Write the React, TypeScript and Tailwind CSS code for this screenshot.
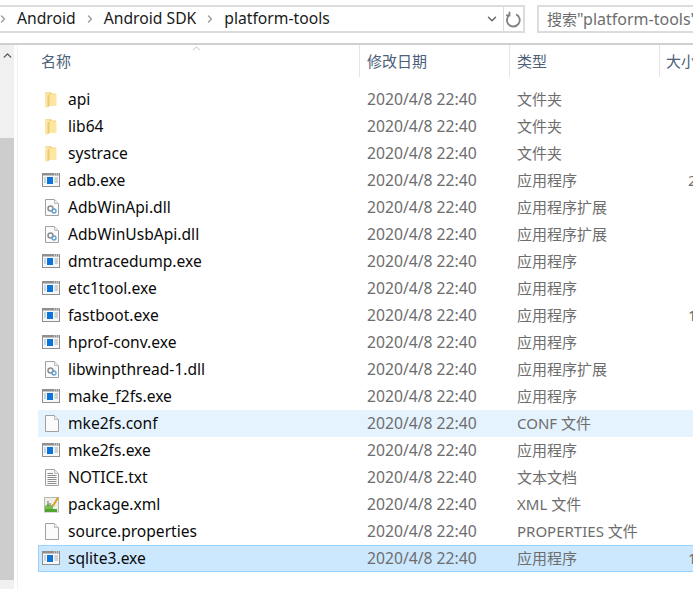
import { ChevronDown, ChevronRight, ChevronUp } from "lucide-react"

type Kind = "folder" | "exe" | "dll" | "blank" | "txt" | "xml"

const FILES: { name: string; kind: Kind; type: string; size?: string; state?: "hover" | "selected" }[] = [
  { name: "api", kind: "folder", type: "文件夹" },
  { name: "lib64", kind: "folder", type: "文件夹" },
  { name: "systrace", kind: "folder", type: "文件夹" },
  { name: "adb.exe", kind: "exe", type: "应用程序", size: "2" },
  { name: "AdbWinApi.dll", kind: "dll", type: "应用程序扩展" },
  { name: "AdbWinUsbApi.dll", kind: "dll", type: "应用程序扩展" },
  { name: "dmtracedump.exe", kind: "exe", type: "应用程序" },
  { name: "etc1tool.exe", kind: "exe", type: "应用程序" },
  { name: "fastboot.exe", kind: "exe", type: "应用程序", size: "1" },
  { name: "hprof-conv.exe", kind: "exe", type: "应用程序" },
  { name: "libwinpthread-1.dll", kind: "dll", type: "应用程序扩展" },
  { name: "make_f2fs.exe", kind: "exe", type: "应用程序" },
  { name: "mke2fs.conf", kind: "blank", type: "CONF 文件", state: "hover" },
  { name: "mke2fs.exe", kind: "exe", type: "应用程序" },
  { name: "NOTICE.txt", kind: "txt", type: "文本文档" },
  { name: "package.xml", kind: "xml", type: "XML 文件" },
  { name: "source.properties", kind: "blank", type: "PROPERTIES 文件" },
  { name: "sqlite3.exe", kind: "exe", type: "应用程序", size: "1", state: "selected" },
]

const Page = ({ children }: { children?: React.ReactNode }) => (
  <svg width="16" height="18" viewBox="0 0 16 18" className="ml-[1px]">
    <path d="M1.5 0.5H10.5L14.5 4.5V16.5H1.5Z" fill="#fbfbfb" stroke="#a0a0a0" />
    <path d="M10.5 0.5V4.5H14.5" fill="#ececec" stroke="#bdbdbd" />
    {children}
  </svg>
)

const FileIcon = ({ kind }: { kind: Kind }) => {
  if (kind === "folder")
    return (
      <svg width="18" height="18" viewBox="0 0 18 18">
        <path d="M3 1H9L10 2.5H14V14.5H3Z" fill="#f3d584" />
        <path d="M3 1.5H7V15.5L5 16.5H3Z" fill="#fbe8ae" />
        <path d="M7 3.5H14.5V14.5H7Z" fill="#fce6a0" />
        <path d="M5.5 4.5L7.5 3.5V15L5.5 16.5Z" fill="#eccb70" />
      </svg>
    )
  if (kind === "exe")
    return (
      <svg width="18" height="15" viewBox="0 0 18 15">
        <rect x="0.5" y="0.5" width="17" height="13" fill="#f7f7f7" stroke="#8f8f8f" />
        <rect x="0" y="0" width="18" height="2.5" fill="#8f8f8f" />
        <path d="M12 1H13M14 1H15M16 1H17" stroke="#ffffff" />
        <rect x="5" y="4" width="6" height="7" fill="#0a76dd" />
        <path d="M12.5 5H16M12.5 7H16M12.5 9H16M2 5H4M2 7H4M2 9H4" stroke="#a8adb3" />
      </svg>
    )
  if (kind === "dll")
    return (
      <Page>
        <circle cx="6.5" cy="9.5" r="2.5" fill="none" stroke="#8d8d8d" strokeWidth="1.5" />
        <circle cx="10" cy="12" r="2" fill="none" stroke="#5d9fd0" strokeWidth="1.3" />
      </Page>
    )
  if (kind === "txt")
    return (
      <Page>
        <path d="M3.5 4.5H9M3.5 6.5H12.5M3.5 8.5H12.5M3.5 10.5H12.5M3.5 12.5H12.5M3.5 14.5H12.5" stroke="#8d8d8d" />
      </Page>
    )
  if (kind === "xml")
    return (
      <svg width="16" height="18" viewBox="0 0 16 18" className="ml-[1px]">
        <rect x="0.5" y="1.5" width="14" height="14.5" fill="#eeeeea" stroke="#b9b9b0" />
        <path d="M1 10L4 8L6 10L9 8V16H1Z" fill="#78c04a" />
        <path d="M1 13H13V16H1Z" fill="#4fa52f" />
        <path d="M4 5V10M6 7V10" stroke="#6f6f58" />
        <path d="M9 10L14 1.5" stroke="#d9a126" strokeWidth="2" />
      </svg>
    )
  return <Page />
}

const FileRow = ({ file }: { file: (typeof FILES)[number] }) => {
  const bg =
    file.state === "selected"
      ? "bg-[#cce8ff] border-[#99d1ff]"
      : file.state === "hover"
        ? "bg-[#e5f3ff] border-[#e5f3ff]"
        : "border-transparent"
  return (
    <div className={`flex h-[27px] items-center border-y border-l ${bg}`}>
      <div className="flex w-[23px] shrink-0 justify-center pl-[1px]">
        <FileIcon kind={file.kind} />
      </div>
      <span className="w-[305px] shrink-0 pl-[6px] text-[15.6px] text-[#0a0a0a]">{file.name}</span>
      <span className="w-[150px] shrink-0 whitespace-nowrap text-[15.7px] text-[#6d6d6d]">2020/4/8 22:40</span>
      <span className="w-[171px] shrink-0 text-[15px] text-[#6d6d6d]">{file.type}</span>
      <span className="text-[15px] text-[#6d6d6d]">{file.size}</span>
    </div>
  )
}

const Crumb = ({ label }: { label: string }) => (
  <>
    <ChevronRight size={12} strokeWidth={3} className="shrink-0 text-[#a0a0a0]" />
    <span className="text-[15.7px] text-[#1a1a1a]">{label}</span>
  </>
)

const App = () => {
  return (
    <div
      className="flex h-[589px] w-[693px] flex-col overflow-hidden bg-white"
      style={{ fontFamily: '"Noto Sans", "Noto Sans CJK SC", sans-serif' }}
    >
      {/* toolbar */}
      <div className="flex h-[45px] shrink-0 items-start border-b-2 border-[#d0d0d0] pt-[5px]">
        <div className="flex h-[28px] w-[525px] shrink-0 items-center border-y-2 border-r-2 border-[#dcdcdc]">
          <div className="-ml-[3px] flex flex-1 items-center gap-[8px]">
            <Crumb label="Android" />
            <Crumb label="Android SDK" />
            <Crumb label="platform-tools" />
          </div>
          <ChevronDown size={14} strokeWidth={2.5} className="mr-[4px] text-[#666]" />
          <div className="flex h-full w-[20px] items-center justify-center border-l border-[#dcdcdc]">
            <svg width="17" height="17" viewBox="0 0 16 16" fill="none" stroke="#808080" strokeWidth="1.7">
              <path d="M10.5 3.2A6 6 0 1 1 4.5 3.6" />
              <path d="M4.2 0.8V4.2H1" />
            </svg>
          </div>
        </div>
        <div className="ml-[12px] flex h-[28px] flex-1 items-center overflow-hidden whitespace-nowrap border-y-2 border-l-2 border-[#dcdcdc] pl-[8px] text-[16px] text-[#6d6d6d]">
          <span className="text-[15px]">搜索</span>"platform-tools"
        </div>
      </div>

      <div className="flex min-h-0 flex-1">
        {/* scrollbar */}
        <div className="flex w-[14px] shrink-0 flex-col bg-[#f0f0f0] pb-[9px]">
          <div className="flex h-[20px] items-center justify-center">
            <ChevronUp size={13} strokeWidth={2.5} className="text-[#555]" />
          </div>
          <div className="h-[73px]" />
          <div className="flex-1 bg-[#cdcdcd]" />
        </div>

        <div className="relative ml-[3px] min-w-0 flex-1 border-l border-[#f0f0f0]">
          <ChevronUp size={13} strokeWidth={1} className="absolute left-[172px] top-[-3px] text-[#888]" />
          {/* column headers */}
          <div className="flex h-[32px] items-center text-[15px] text-[#4c607a]">
            <span className="w-[341px] shrink-0 pl-[23px]">名称</span>
            <span className="h-full w-[150px] shrink-0 border-l border-[#e5e5e5] pl-[7px] leading-[32px]">修改日期</span>
            <span className="h-full w-[150px] shrink-0 border-l border-[#e5e5e5] pl-[7px] leading-[32px]">类型</span>
            <span className="h-full flex-1 whitespace-nowrap border-l border-[#e5e5e5] pl-[6px] leading-[32px]">大小</span>
          </div>
          <div className="ml-[20px] mt-[9px]">
            {FILES.map((file) => (
              <FileRow key={file.name} file={file} />
            ))}
          </div>
        </div>
      </div>
    </div>
  )
}

export default App
